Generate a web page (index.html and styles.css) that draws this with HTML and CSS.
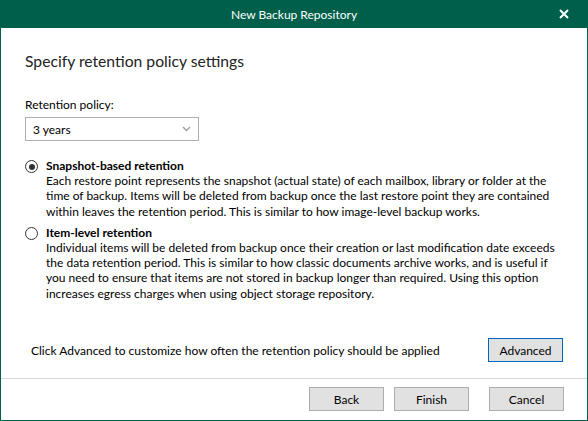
FILE: index.html
```html
<!DOCTYPE html>
<html lang="en">
<head>
    <meta charset="UTF-8">
    <title>New Backup Repository</title>
    <link rel="stylesheet" href="styles.css">
</head>
<body>
    <div class="window">
        <div class="titlebar">
            <span class="title">New Backup Repository</span>
            <svg class="close" width="10" height="10" viewBox="0 0 10 10">
                <path d="M1 1L9 9M9 1L1 9" stroke="#fff" stroke-width="2"/>
            </svg>
        </div>
        <div class="content">
            <h1>Specify retention policy settings</h1>
            <label class="field-label">Retention policy:</label>
            <div class="select">
                <span>3 years</span>
                <svg width="9" height="6" viewBox="0 0 9 6">
                    <path d="M1 1L4.5 4.5L8 1" stroke="#a0a0a0" stroke-width="1.5" fill="none"/>
                </svg>
            </div>
            <div class="option">
                <span class="radio checked"></span>
                <div class="option-text">
                    <div class="option-title">Snapshot-based retention</div>
                    <p>Each restore point represents the snapshot (actual state) of each mailbox, library or folder at the<br>
                    time of backup. Items will be deleted from backup once the last restore point they are contained<br>
                    within leaves the retention period. This is similar to how image-level backup works.</p>
                </div>
            </div>
            <div class="option">
                <span class="radio"></span>
                <div class="option-text">
                    <div class="option-title">Item-level retention</div>
                    <p>Individual items will be deleted from backup once their creation or last modification date exceeds<br>
                    the data retention period. This is similar to how classic documents archive works, and is useful if<br>
                    you need to ensure that items are not stored in backup longer than required. Using this option<br>
                    increases egress charges when using object storage repository.</p>
                </div>
            </div>
            <div class="advanced-row">
                <span>Click Advanced to customize how often the retention policy should be applied</span>
                <button class="btn focused">Advanced</button>
            </div>
        </div>
        <div class="footer">
            <button class="btn">Back</button>
            <button class="btn">Finish</button>
            <button class="btn cancel">Cancel</button>
        </div>
    </div>
</body>
</html>
```
FILE: styles.css
```css
* {
    margin: 0;
    padding: 0;
    box-sizing: border-box;
}
body {
    font-family: Lato, sans-serif;
    font-size: 12px;
    color: #000;
    background: #fff;
}
.window {
    width: 588px;
    height: 421px;
    display: flex;
    flex-direction: column;
    border: 1px solid #005f4b;
    border-top: none;
    overflow: hidden;
}
.titlebar {
    flex-shrink: 0;
    height: 28px;
    margin: 0 -1px;
    background: #005f4b;
    color: #fff;
    display: flex;
    align-items: center;
    justify-content: center;
    position: relative;
}
.titlebar .title {
    font-size: 12px;
}
.titlebar .close {
    position: absolute;
    right: 19px;
    top: 9px;
}
.content {
    flex: 1;
    padding: 24px 24px 0 24px;
}
h1 {
    font-size: 15.7px;
    font-weight: normal;
    color: #222;
    margin-bottom: 27px;
}
.field-label {
    display: block;
    margin-bottom: 5px;
}
.select {
    width: 174px;
    height: 24px;
    border: 1px solid #adadad;
    display: flex;
    align-items: center;
    justify-content: space-between;
    padding: 0 7px 0 7px;
    margin-bottom: 17px;
}
.option {
    display: flex;
    gap: 8px;
    margin-bottom: 6px;
}
.radio {
    width: 13px;
    height: 13px;
    border: 1px solid #333;
    border-radius: 50%;
    margin-top: 2px;
    display: flex;
    align-items: center;
    justify-content: center;
    flex-shrink: 0;
}
.radio.checked::after {
    content: "";
    width: 6px;
    height: 6px;
    border-radius: 50%;
    background: #333;
}
.option-title {
    font-weight: bold;
}
.option-text p {
    line-height: 15.3px;
    white-space: nowrap;
}
.advanced-row {
    display: flex;
    justify-content: space-between;
    align-items: center;
    margin-top: 37px;
    padding-left: 6px;
}
.btn {
    width: 75px;
    height: 24px;
    border: 1px solid #adadad;
    background: #e1e1e1;
    font-family: inherit;
    font-size: 12px;
    color: #000;
}
.btn.focused {
    border-color: #0067c0;
}
.footer {
    flex-shrink: 0;
    height: 42px;
    border-top: 1px solid #d6d6d6;
    display: flex;
    justify-content: flex-end;
    padding: 8px 23px 0 0;
    gap: 10px;
}
.footer .cancel {
    margin-left: 10px;
}
```
